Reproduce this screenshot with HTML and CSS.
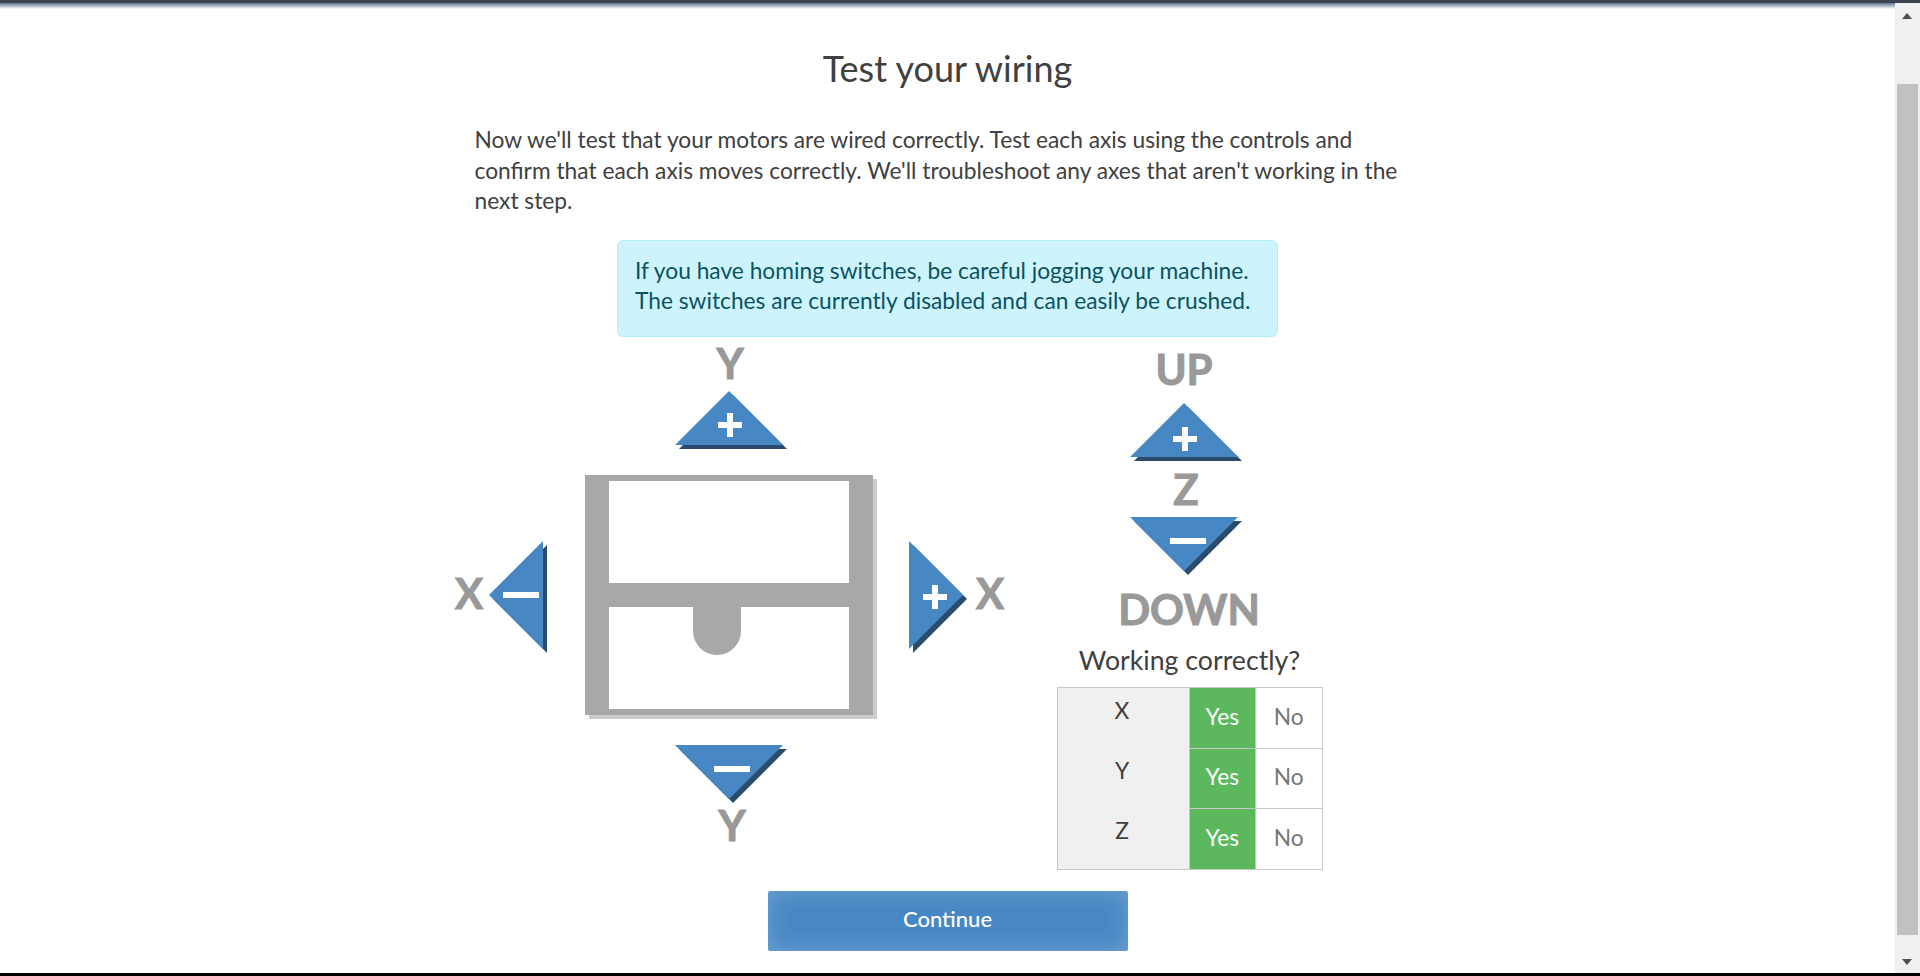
FILE: index.html
```html
<!DOCTYPE html>
<html lang="en">
<head>
    <meta charset="UTF-8">
    <title>Test your wiring</title>
    <link rel="stylesheet" href="styles.css">
</head>
<body>
    <div class="top-strip"></div>

    <div class="window">
        <div class="page">
            <div class="top-shade"></div>
            <h1 class="title">Test your wiring</h1>
            <p class="intro">Now we'll test that your motors are wired correctly. Test each axis using the controls and confirm that each axis moves correctly. We'll troubleshoot any axes that aren't working in the next step.</p>

            <div class="alert">If you have homing switches, be careful jogging your machine.<br>The switches are currently disabled and can easily be crushed.</div>

            <div class="jog">
                <!-- XY pad: coordinates are page pixels, hence the viewBox origin -->
                <svg class="xy-pad" viewBox="450 335 560 515" width="560" height="515">
                    <text class="axis-label" x="730" y="379" text-anchor="middle">Y</text>
                    <polygon class="arrow-shadow" points="733,395 787,449 679,449"/>
                    <polygon class="arrow" points="729,391 783,445 675,445"/>
                    <path class="sign" d="M727 413h6v9h9v6h-9v9h-6v-9h-9v-6h9z"/>

                    <polygon class="frame-shadow" points="877,479 877,719 589,719 589,715 873,715 873,479"/>
                    <path class="frame" fill-rule="evenodd" d="M585 475h288v240h-288z M609 481v102h240v-102z M609 607v102h240v-102h-108v24a24 24 0 0 1 -48 0v-24z"/>

                    <text class="axis-label" x="469" y="609" text-anchor="middle">X</text>
                    <polygon class="arrow-shadow" points="547,545 547,653 493,599"/>
                    <polygon class="arrow" points="543,541 543,649 489,595"/>
                    <rect class="sign" x="503" y="592" width="36" height="6"/>

                    <polygon class="arrow-shadow" points="913,545 913,653 967,599"/>
                    <polygon class="arrow" points="909,541 909,649 963,595"/>
                    <path class="sign" d="M932 585h6v9h9v6h-9v9h-6v-9h-9v-6h9z"/>
                    <text class="axis-label" x="990" y="609" text-anchor="middle">X</text>

                    <polygon class="arrow-shadow" points="679,749 787,749 733,803"/>
                    <polygon class="arrow" points="675,745 783,745 729,799"/>
                    <rect class="sign" x="714" y="766" width="36" height="6"/>
                    <text class="axis-label" x="732" y="841" text-anchor="middle">Y</text>
                </svg>

                <div class="side">
                    <svg class="z-pad" viewBox="1057 340 266 295" width="266" height="295">
                        <text class="axis-label" x="1184" y="385" text-anchor="middle">UP</text>
                        <polygon class="arrow-shadow" points="1188,407 1242,461 1134,461"/>
                        <polygon class="arrow" points="1184,403 1238,457 1130,457"/>
                        <path class="sign" d="M1182 427h6v9h9v6h-9v9h-6v-9h-9v-6h9z"/>
                        <text class="axis-label" x="1186" y="505" text-anchor="middle">Z</text>
                        <polygon class="arrow-shadow" points="1134,521 1242,521 1188,575"/>
                        <polygon class="arrow" points="1130,517 1238,517 1184,571"/>
                        <rect class="sign" x="1170" y="538" width="36" height="6"/>
                        <text class="axis-label" x="1189" y="625" text-anchor="middle">DOWN</text>
                    </svg>

                    <div class="check-title">Working correctly?</div>
                    <div class="check-table">
                        <div class="axis-col">
                            <div class="axis-name">X</div>
                            <div class="axis-name">Y</div>
                            <div class="axis-name">Z</div>
                        </div>
                        <div class="answers">
                            <div class="answer-row"><div class="yes">Yes</div><div class="no">No</div></div>
                            <div class="answer-row"><div class="yes">Yes</div><div class="no">No</div></div>
                            <div class="answer-row"><div class="yes">Yes</div><div class="no">No</div></div>
                        </div>
                    </div>
                </div>
            </div>

            <button class="continue">Continue</button>
        </div>

        <div class="scrollbar">
            <div class="scroll-up"></div>
            <div class="scroll-thumb"></div>
            <div class="scroll-down"></div>
        </div>
    </div>

    <div class="bottom-strip"></div>
</body>
</html>
```

FILE: styles.css
```css
* {
    box-sizing: border-box;
}

body {
    margin: 0;
    height: 976px;
    display: flex;
    flex-direction: column;
    overflow: hidden;
    background: #fff;
    font-family: 'Lato', sans-serif;
    color: #404040;
}

.top-strip {
    height: 3px;
    background: #3b4450;
}

.bottom-strip {
    height: 3px;
    background: #000;
}

.window {
    flex: 1;
    display: flex;
    min-height: 0;
}

/* Page content */
.page {
    flex: 1;
    position: relative;
    display: flex;
    flex-direction: column;
    align-items: center;
}

.top-shade {
    position: absolute;
    top: 0;
    left: 0;
    right: 0;
    height: 6px;
    background: linear-gradient(#5d7792, rgba(255, 255, 255, 0));
}

.title {
    margin: 45px 0 0;
    font-size: 36px;
    line-height: 40px;
    font-weight: 400;
}

.intro {
    width: 946px;
    margin: 37px 0 0;
    font-size: 22.75px;
    line-height: 30.5px;
}

.alert {
    width: 661px;
    height: 97px;
    margin-top: 23px;
    padding: 15px 17px;
    font-size: 22.75px;
    line-height: 30.5px;
    white-space: nowrap;
    color: #0b5263;
    background: #cdf4fc;
    border: 1px solid #b3edf9;
    border-radius: 6px;
}

/* Jog controls */
.jog {
    display: flex;
    align-items: flex-start;
    gap: 47px;
    width: 946px;
    margin-top: -2px;
    margin-left: -50px;
}

.xy-pad {
    display: block;
    flex: none;
}

.z-pad {
    display: block;
}

.side {
    width: 266px;
    flex: none;
    margin-top: 5px;
}

.axis-label {
    font-family: 'Lato', sans-serif;
    font-size: 42px;
    font-weight: 700;
    fill: #999;
    stroke: #999;
    stroke-width: 1px;
}

.arrow {
    fill: #4788c4;
}

.arrow-shadow {
    fill: #2b4c6c;
}

.sign {
    fill: #fff;
}

.frame {
    fill: #a8a8a8;
}

.frame-shadow {
    fill: #ccc;
}

/* Working correctly table */
.check-title {
    margin-top: 9px;
    font-size: 26.7px;
    line-height: 32px;
    text-align: center;
}

.check-table {
    display: flex;
    width: 266px;
    height: 183px;
    margin-top: 11px;
    border: 1px solid #c8c8c8;
    font-size: 22.75px;
}

.axis-col {
    width: 132px;
    flex: none;
    padding-right: 2px;
    background: #f0f0f0;
    border-right: 1px solid #c8c8c8;
}

.axis-name {
    height: 60px;
    padding-top: 9px;
    line-height: 28px;
    text-align: center;
}

.answers {
    flex: 1;
    display: flex;
    flex-direction: column;
}

.answer-row {
    flex: 1;
    display: flex;
    border-bottom: 1px solid #c8c8c8;
}

.answer-row:first-child {
    flex: none;
    height: 61px;
}

.answer-row:last-child {
    border-bottom: none;
}

.yes,
.no {
    flex: 1;
    display: flex;
    align-items: center;
    justify-content: center;
    padding-bottom: 3px;
}

.yes {
    background: #5cb85c;
    color: #fff;
    border-right: 1px solid #c8c8c8;
}

.no {
    color: #777;
}

/* Continue button */
.continue {
    width: 360px;
    height: 60px;
    margin-top: 21px;
    padding: 0 0 4px;
    border: none;
    border-radius: 2px;
    background: #4788c4;
    box-shadow: inset 0 0 22px rgba(255, 255, 255, 0.22);
    color: #fff;
    font-family: 'Lato', sans-serif;
    font-size: 22px;
    font-weight: 500;
}

/* Scrollbar */
.scrollbar {
    width: 25px;
    flex: none;
    position: relative;
    background: #f0f0f0;
}

.scroll-thumb {
    position: absolute;
    top: 81px;
    bottom: 38px;
    left: 2px;
    right: 2px;
    background: #c1c1c1;
}

.scroll-up,
.scroll-down {
    position: absolute;
    left: 7px;
    width: 0;
    height: 0;
    border-left: 5.5px solid transparent;
    border-right: 5.5px solid transparent;
}

.scroll-up {
    top: 10px;
    border-bottom: 6px solid #505050;
}

.scroll-down {
    bottom: 8px;
    border-top: 6px solid #505050;
}
```
